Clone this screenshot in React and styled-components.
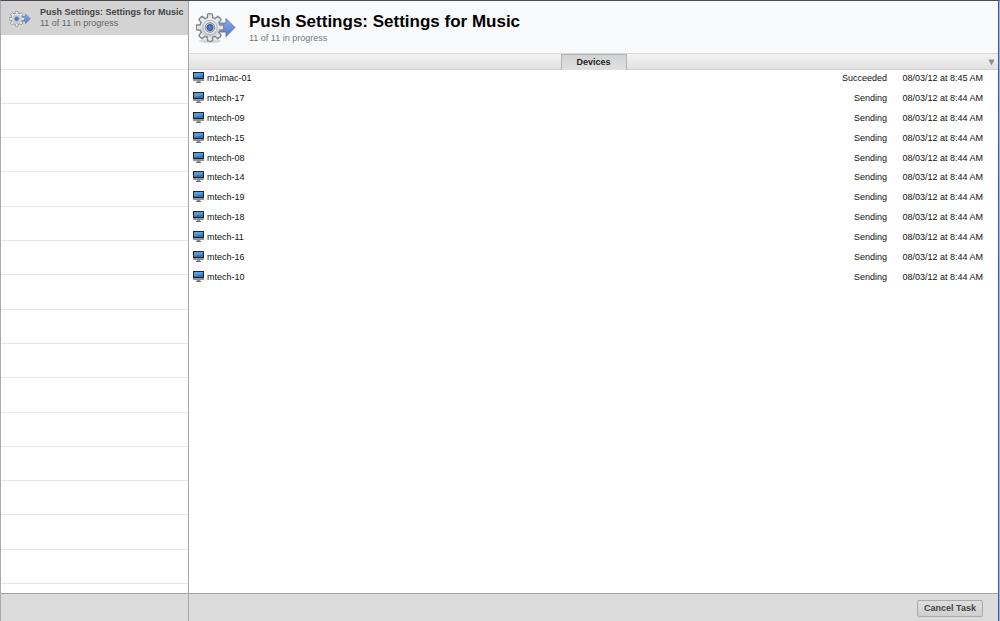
import React from "react";
import styled, { createGlobalStyle } from "styled-components";

const GlobalStyle = createGlobalStyle`
  * {
    box-sizing: border-box;
  }

  body {
    margin: 0;
    background: #fff;
    color: #111;
    font: 9px/12px "Liberation Sans", Arial, sans-serif;
  }
`;

const Window = styled.div`
  display: grid;
  grid-template-columns: 188px 1fr;
  grid-template-rows: 1fr auto;
  min-height: 100vh;
  border-top: 1px solid #4a4a50;
  border-left: 1px solid #a9abb0;
  border-right: 1px solid #9db2e0;
`;

const Sidebar = styled.nav`
  display: flex;
  padding-bottom: 9px;
  border-right: 1px solid #a6a6a6;
`;

const TaskList = styled.ul`
  flex: 1;
  display: grid;
  grid-template-rows: repeat(17, 1fr);
  margin: 0;
  padding: 0;
  list-style: none;
`;

const TaskSlot = styled.li`
  display: flex;
  background: ${props => (props.$selected ? "#d3d3d3" : "#fff")};
  border-bottom: 1px solid ${props => (props.$selected ? "#d3d3d3" : "#e4e6e7")};
`;

const TaskLink = styled.a`
  flex: 1;
  display: flex;
  align-items: center;
  gap: 9px;
  padding: 1px 0 0 8px;
  color: #444;
  text-decoration: none;
`;

const TaskName = styled.strong`
  display: block;
  line-height: 11px;
`;

const TaskStatus = styled.span`
  display: block;
  color: #666;
  line-height: 11px;
`;

const Main = styled.main`
  min-width: 0;
  border-right: 1px solid #3b5ba8;
`;

const Header = styled.header`
  display: flex;
  gap: 13px;
  height: 52px;
  padding: 5px 7px 0;
  background: #f8fafc;
`;

const Title = styled.h1`
  margin: 6px 0 0;
  color: #000;
  font-size: 17px;
  line-height: 20px;
`;

const Subtitle = styled.p`
  margin: 0;
  color: #777;
`;

const TabBar = styled.div`
  display: grid;
  grid-template-columns: 1fr auto 1fr;
  height: 17px;
  border-top: 1px solid #d8dadb;
  border-bottom: 1px solid #cfcfcf;
  background: linear-gradient(#f3f3f3, #e1e1e1);
`;

const Tab = styled.button`
  grid-column: 2;
  width: 66px;
  padding: 0;
  border: 1px solid #b3b3b3;
  border-bottom: 0;
  background: linear-gradient(#d3d3d3, #e0e0e0);
  color: #222;
  font: bold 9px/15px "Liberation Sans", Arial, sans-serif;
`;

const MenuButton = styled.button`
  justify-self: end;
  display: flex;
  align-items: center;
  padding: 0 3px;
  border: 0;
  background: none;
`;

const DeviceTable = styled.table`
  width: 100%;
  height: 218px;
  border-collapse: collapse;

  td {
    padding: 0 0 3px;
    text-align: right;
    white-space: nowrap;
  }

  td:first-child {
    padding-left: 4px;
    text-align: left;
  }

  td:last-child {
    width: 111px;
    padding-right: 15px;
  }
`;

const DeviceName = styled.span`
  display: flex;
  align-items: center;
  gap: 3px;
`;

const Footer = styled.footer`
  display: flex;
  justify-content: flex-end;
  height: 28px;
  padding: 6px 15px 0;
  border-top: 1px solid #a3a3a3;
  border-right: 1px solid ${props => (props.$side ? "#a6a6a6" : "#3b5ba8")};
  background: #dcdcdc;
`;

const CancelButton = styled.button`
  width: 66px;
  height: 17px;
  padding: 0;
  border: 1px solid #aaa;
  border-radius: 2px;
  background: linear-gradient(#dedede, #cfcfcf);
  color: #444;
  font: bold 9px/15px "Liberation Sans", Arial, sans-serif;
`;

const TEETH = [0, 45, 90, 135, 180, 225, 270, 315];

const PushIcon = ({ width, height }) => (
  <svg width={width} height={height} viewBox="0 0 40 40" aria-hidden="true">
    <defs>
      <linearGradient id="metal" x1="0" y1="0" x2="0" y2="1">
        <stop offset="0" stopColor="#f1f2f4" />
        <stop offset="1" stopColor="#c6cad0" />
      </linearGradient>
      <linearGradient id="arrow" x1="0" y1="0" x2="0" y2="1">
        <stop offset="0" stopColor="#8daee8" />
        <stop offset="1" stopColor="#5079c8" />
      </linearGradient>
    </defs>
    <ellipse cx="14" cy="35" rx="11" ry="2" fill="#d5d8db" />
    <path
      d="M23 17H30V12.5L39 21.5L30 30.5V26H23Z"
      fill="url(#arrow)"
      stroke="#4c6cad"
      strokeWidth="0.8"
    />
    <g fill="#e3e6e9" stroke="#858a91" strokeWidth="1.6">
      {TEETH.map(angle => (
        <path
          key={angle}
          d="M11.2 12L11.8 8.2Q14 7.4 16.2 8.2L16.8 12Z"
          transform={`rotate(${angle} 14 21.5)`}
        />
      ))}
      <circle cx="14" cy="21.5" r="10" />
    </g>
    <g fill="#e3e6e9">
      {TEETH.map(angle => (
        <path
          key={angle}
          d="M11.9 13L12.4 8.8Q14 8.1 15.6 8.8L16.1 13Z"
          transform={`rotate(${angle} 14 21.5)`}
        />
      ))}
    </g>
    <circle cx="14" cy="21.5" r="9.4" fill="url(#metal)" />
    <circle cx="14" cy="21.5" r="7.2" fill="#e6e8eb" stroke="#adb1b7" />
    <circle cx="14" cy="21.5" r="4.8" fill="#c3c9d3" stroke="#858b95" />
    <circle cx="14" cy="21.5" r="3" fill="#4b78c9" stroke="#36548f" />
  </svg>
);

const ComputerIcon = () => (
  <svg width="11" height="12" viewBox="0 0 11 12" aria-hidden="true">
    <path d="M0 0H11V9H0Z" fill="#8f9297" />
    <path d="M0 0H11V7H0Z" fill="#20242c" />
    <path d="M1 1H10V6H1Z" fill="#2f73b8" />
    <path d="M1 1H10V3L1 5Z" fill="#5a9ad6" />
    <path d="M4 9H7L7.5 10H3.5Z" fill="#8a8a8a" />
    <path d="M3 10H8V11H3Z" fill="#777" />
  </svg>
);

const devices = [
  "m1imac-01",
  "mtech-17",
  "mtech-09",
  "mtech-15",
  "mtech-08",
  "mtech-14",
  "mtech-19",
  "mtech-18",
  "mtech-11",
  "mtech-16",
  "mtech-10"
].map((name, i) => ({
  name,
  status: i === 0 ? "Succeeded" : "Sending",
  date: i === 0 ? "08/03/12 at 8:45 AM" : "08/03/12 at 8:44 AM"
}));

const emptySlots = Array.from({ length: 16 }, (_, i) => i);

const App = () => (
  <React.Fragment>
    <GlobalStyle />
    <Window>
      <Sidebar aria-label="Tasks">
        <TaskList>
          <TaskSlot $selected>
            <TaskLink href="#task">
              <PushIcon width={22} height={22} />
              <span>
                <TaskName>Push Settings: Settings for Music</TaskName>
                <TaskStatus>11 of 11 in progress</TaskStatus>
              </span>
            </TaskLink>
          </TaskSlot>
          {emptySlots.map(slot => (
            <TaskSlot key={slot} />
          ))}
        </TaskList>
      </Sidebar>

      <Main>
        <Header>
          <PushIcon width={40} height={40} />
          <div>
            <Title>Push Settings: Settings for Music</Title>
            <Subtitle>11 of 11 in progress</Subtitle>
          </div>
        </Header>
        <TabBar>
          <Tab type="button">Devices</Tab>
          <MenuButton type="button" aria-label="Sort devices">
            <svg width="7" height="7" viewBox="0 0 7 7" aria-hidden="true">
              <path d="M0.5 0.5H6.5L3.5 6.5Z" fill="#8c8c8c" />
            </svg>
          </MenuButton>
        </TabBar>
        <DeviceTable aria-label="Devices">
          <tbody>
            {devices.map(device => (
              <tr key={device.name}>
                <td>
                  <DeviceName>
                    <ComputerIcon />
                    {device.name}
                  </DeviceName>
                </td>
                <td>{device.status}</td>
                <td>{device.date}</td>
              </tr>
            ))}
          </tbody>
        </DeviceTable>
      </Main>

      <Footer as="div" $side />
      <Footer>
        <CancelButton type="button">Cancel Task</CancelButton>
      </Footer>
    </Window>
  </React.Fragment>
);

export default App;
